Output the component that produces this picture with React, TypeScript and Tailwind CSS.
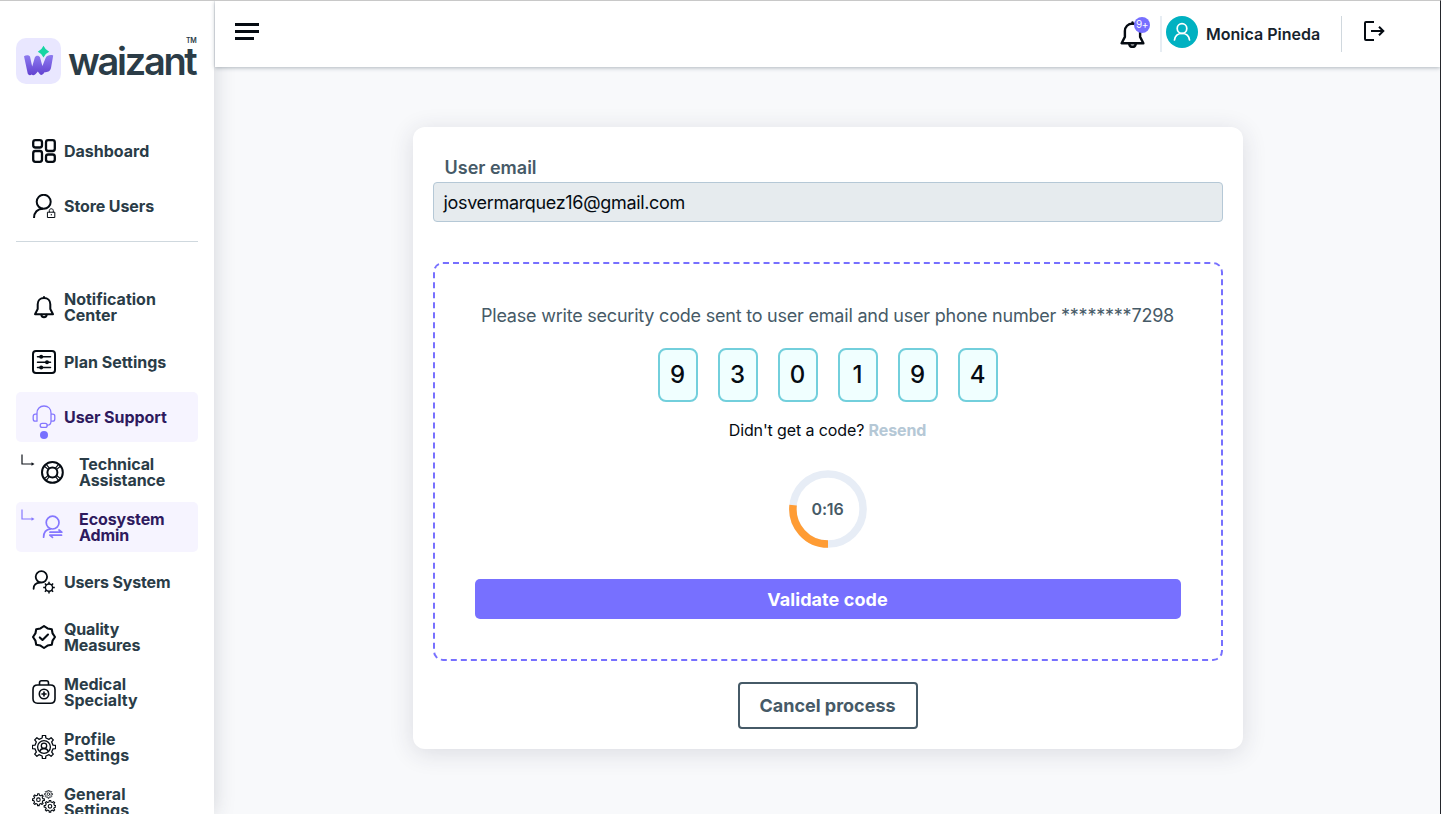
import React from "react";

type P = { children?: React.ReactNode; size?: number; w?: number; className?: string };
const Svg = ({ children, size = 24, w = 2, className = "" }: P) => (
  <svg width={size} height={size} viewBox="0 0 24 24" fill="none" stroke="currentColor" strokeWidth={w} strokeLinecap="round" strokeLinejoin="round" className={className}>
    {children}
  </svg>
);

function gearPath(cx: number, cy: number, r: number, R: number, n: number) {
  const pts: string[] = [];
  const step = (Math.PI * 2) / n;
  for (let i = 0; i < n; i++) {
    const a = i * step - Math.PI / 2;
    const at = (rad: number, off: number) =>
      `${(cx + rad * Math.cos(a + off * step)).toFixed(2)} ${(cy + rad * Math.sin(a + off * step)).toFixed(2)}`;
    pts.push(at(r, -0.26), at(R, -0.17), at(R, 0.17), at(r, 0.26));
  }
  return "M" + pts.join("L") + "Z";
}

function sealPath() {
  const pts: [number, number][] = [];
  for (let i = 0; i < 16; i++) {
    const a = (i * Math.PI) / 8 - Math.PI / 2;
    const r = i % 2 ? 9.3 : 11;
    pts.push([12 + r * Math.cos(a), 12 + r * Math.sin(a)]);
  }
  return "M" + pts.map((p) => p.map((v) => v.toFixed(2)).join(" ")).join("L") + "Z";
}

const BellShape = () => (
  <>
    <path d="M12 3C8.3 3 5.7 5.6 5.7 9.2V14L3 19.2H21L18.3 14V9.2C18.3 5.6 15.7 3 12 3Z" />
    <path d="M12 2V3M9.3 19.8C9.6 21.4 10.6 22.2 12 22.2S14.4 21.4 14.7 19.8" />
  </>
);

const icons = {
  dashboard: (
    <Svg w={2.3}>
      <rect x="1.2" y="1.2" width="8.8" height="7.3" rx="2.2" />
      <rect x="14" y="1.2" width="8.8" height="10.8" rx="2.2" />
      <rect x="1.2" y="12" width="8.8" height="10.8" rx="2.2" />
      <rect x="14" y="15.5" width="8.8" height="7.3" rx="2.2" />
    </Svg>
  ),
  store: (
    <Svg w={2}>
      <circle cx="11.7" cy="7.8" r="7" />
      <path strokeLinecap="butt" d="M2 24C2 18.5 5.5 14.7 11 14.7" />
      <path strokeWidth="1" d="M15.8 18.2H22.8V23.5H15.8ZM17.3 18V16.5C17.3 14.2 21.3 14.2 21.3 16.5V18M19.3 20.4V21" />
    </Svg>
  ),
  bell: <Svg><BellShape /></Svg>,
  plan: (
    <Svg>
      <rect x="1" y="1" width="22" height="22" rx="3" />
      <path strokeWidth="1.5" d="M5.5 6.8H18.5M5.5 12.3H18.5M5.5 17.6H18.5" />
      <g fill="currentColor" stroke="none"><circle cx="9.2" cy="6.8" r="2" /><circle cx="15" cy="12.3" r="2" /><circle cx="9.2" cy="17.6" r="2" /></g>
    </Svg>
  ),
  support: (
    <Svg w={1.3}>
      <path d="M5 9V8C5 3.8 7.8 1 12 1S19 3.8 19 8V9M5 9.2H3.3C2 9.2 1.2 10 1.2 11.3V14C1.2 15.3 2 16.2 3.3 16.2H5ZM19 9.2H20.7C22 9.2 22.8 10 22.8 11.3V14C22.8 15.3 22 16.2 20.7 16.2H19ZM19 16.2C19 18.8 17.5 20.2 15.2 20.2" />
      <rect x="8.2" y="18.4" width="7" height="4" rx="2" />
    </Svg>
  ),
  lifebuoy: (
    <Svg w={2}>
      <circle cx="12.4" cy="12.4" r="10.4" />
      <circle cx="12.4" cy="12.4" r="5" />
      <path d="M4.4 6.2L8.4 9.6M6.2 4.4L9.6 8.4M20.4 6.2L16.4 9.6M18.6 4.4L15.2 8.4M4.4 18.6L8.4 15.2M6.2 20.4L9.6 16.4M20.4 18.6L16.4 15.2M18.6 20.4L15.2 16.4" strokeWidth="1.2" />
    </Svg>
  ),
  ecosystem: (
    <Svg w={1.7}>
      <circle cx="12.6" cy="7.6" r="6.4" />
      <path d="M3.6 22.2C3.6 17.8 6 14.6 10.6 13.9M10 17.2H21.8L19 15M21.5 20.2H9.8L12.5 22.4" />
    </Svg>
  ),
  usersSystem: (
    <Svg w={1.8}>
      <circle cx="9.4" cy="6.8" r="5.7" />
      <path d="M1.6 18.8C1.6 15.2 4 12.8 8 12.6" />
      <circle cx="17" cy="17.6" r="3.6" strokeWidth="1.4" />
      <path strokeWidth="1.5" strokeLinecap="butt" d="M17 11.8V14M17 21.2V23.4M11.2 17.6H13.4M20.6 17.6H22.8M12.9 13.5L14.5 15.1M19.5 20.1L21.1 21.7M12.9 21.7L14.5 20.1M19.5 15.1L21.1 13.5" />
    </Svg>
  ),
  quality: <Svg w={2.1}><path d={sealPath()} /><path d="M7.8 12.4L10.5 15L16 9.6" /></Svg>,
  medical: (
    <Svg w={1.6}>
      <path d="M5.5 5H18.5C21.5 5 23 6.8 23 9.5V18.8C23 21.5 21.5 23.2 18.5 23.2H5.5C2.5 23.2 1 21.5 1 18.8V9.5C1 6.8 2.5 5 5.5 5ZM7.5 5V3C7.5 1.5 8.2 .8 9.5 .8H14.5C15.8 .8 16.5 1.5 16.5 3V5" />
      <circle cx="12" cy="14" r="4.7" />
      <path d="M12 12V16M10 14H14" />
    </Svg>
  ),
  profile: (
    <Svg w={1.3}>
      <path d={gearPath(12, 12, 9.2, 11.7, 8)} />
      <circle cx="12" cy="12" r="6.4" />
      <circle cx="12" cy="10.8" r="2.7" />
      <path d="M7.7 16.5C8.3 14.6 9.8 13.5 12 13.5S15.7 14.6 16.3 16.5" />
    </Svg>
  ),
  general: (
    <Svg w={1.1}>
      <path d={gearPath(6.4, 9.7, 4.6, 6, 8)} /><circle cx="6.4" cy="9.7" r="1.8" />
      <path d={gearPath(18, 16.3, 4.5, 5.9, 8)} /><circle cx="18" cy="16.3" r="1.8" />
      <path strokeWidth=".8" d={gearPath(16.5, 4.2, 3, 4.1, 8)} /><circle strokeWidth=".8" cx="16.5" cy="4.2" r="1.3" />
    </Svg>
  ),
};

type Item = { icon: keyof typeof icons; lines: string[]; sub?: boolean; active?: boolean; dot?: boolean; track?: string };

function NavItem({ icon, lines, sub, active, dot, track = "tracking-normal" }: Item) {
  return (
    <a className={`relative flex h-[50px] shrink-0 items-center rounded-[5px] ${sub ? "gap-[15px] pl-6" : "gap-2 pl-4"} ${active ? "bg-[#f6f4ff] text-[#2e1a5e]" : "text-[#2a3c47]"}`}>
      {sub && (
        <svg width="14" height="12" viewBox="0 0 14 12" className={`absolute left-[5px] top-[7px] ${active ? "text-[#8577ff]" : "text-[#10151c]"}`} fill="none" stroke="currentColor" strokeWidth="1.2">
          <path d="M1 .5V10H11" /><path d="M10.5 8.3L13.5 10L10.5 11.7Z" fill="currentColor" stroke="none" />
        </svg>
      )}
      <span className={active ? "text-[#8577ff]" : "text-[#050b12]"}>{icons[icon]}</span>
      <span className={`whitespace-nowrap text-[16px] font-bold leading-4 ${track}`}>
        {lines.map((l) => <span key={l} className="block">{l}</span>)}
      </span>
      {dot && <i className="absolute left-6 top-[39px] size-2 rounded-full bg-[#7770ff]" />}
    </a>
  );
}

function Logo() {
  return (
    <div className="flex h-[46px] items-center gap-[7px]">
      <svg width="45" height="46" viewBox="0 0 45 46" className="shrink-0">
        <defs>
          <linearGradient id="mark" x1="0" y1="0" x2="0" y2="1"><stop offset="0" stopColor="#8d7bf0" /><stop offset="1" stopColor="#6241d0" /></linearGradient>
        </defs>
        <rect width="45" height="46" rx="10" fill="#e9e7ff" />
        <path fill="url(#mark)" d="M8 18.2C9.8 16.8 12.8 16.8 14 18.4L16.2 28.5L18.8 19.5C19.6 17.2 23.2 17.2 24 19.3L26.4 28L29.6 20C31 17 35 16.6 37.2 17.5L35 30C34 34 31.5 34 28.5 34.2C26.5 37.5 24.5 37.6 23.3 35.6L21.8 33.6C19.5 36.5 17.5 38.5 15.6 36.6C13.8 38 12 36.9 11.6 35Z" />
        <path fill="#16d5a3" d="M27.5 7.8Q29.3 12 33.2 13.7Q29.3 15.4 27.5 19.4Q25.7 15.4 21.8 13.7Q25.7 12 27.5 7.8Z" />
      </svg>
      <div className="relative text-[38px] font-semibold leading-[46px] tracking-[-2.3px] text-[#2b3c47]">
        waizant
        <span className="absolute right-[-1px] top-[-3px] text-[7px] font-semibold leading-3 tracking-[-0.3px]">TM</span>
      </div>
    </div>
  );
}

const first: Item[] = [
  { icon: "dashboard", lines: ["Dashboard"] },
  { icon: "store", lines: ["Store Users"], track: "tracking-[-0.1px]" },
];
const second: Item[] = [
  { icon: "bell", lines: ["Notification", "Center"] },
  { icon: "plan", lines: ["Plan Settings"] },
  { icon: "support", lines: ["User Support"], active: true, dot: true, track: "tracking-[-0.08px]" },
  { icon: "lifebuoy", lines: ["Technical", "Assistance"], sub: true, track: "tracking-[-0.08px]" },
  { icon: "ecosystem", lines: ["Ecosystem", "Admin"], sub: true, active: true, track: "tracking-[-0.08px]" },
  { icon: "usersSystem", lines: ["Users System"], track: "tracking-[-0.17px]" },
  { icon: "quality", lines: ["Quality", "Measures"], track: "tracking-[-0.15px]" },
  { icon: "medical", lines: ["Medical", "Specialty"] },
  { icon: "profile", lines: ["Profile", "Settings"], track: "tracking-[0.1px]" },
  { icon: "general", lines: ["General", "Settings"], track: "tracking-[0.1px]" },
];

export default function App() {
  return (
    <div className="flex h-[814px] w-[1441px] overflow-hidden border-r border-t border-r-[#24262c] border-t-[#c8c8c8] bg-[#f8f9fb] font-['Inter',sans-serif]">
      <aside className="z-10 flex w-[214px] shrink-0 flex-col overflow-hidden bg-white px-4 pt-[37px] shadow-[0_0_20px_rgba(40,45,60,0.18)]">
        <Logo />
        <nav className="mt-[42px] flex flex-col gap-[5px]">{first.map((i) => <NavItem key={i.lines[0]} {...i} />)}</nav>
        <hr className="mt-[10px] shrink-0 border-[#cfd8de]" />
        <nav className="mt-10 flex flex-col gap-[5px]">{second.map((i) => <NavItem key={i.lines[0]} {...i} />)}</nav>
      </aside>
      <div className="flex flex-1 flex-col">
        <header className="z-20 ml-px flex h-[66px] items-center bg-white pl-5 shadow-[0_1px_4px_rgba(40,60,75,0.35)]">
          <div className="mb-[5px] flex w-6 flex-col gap-[4px]">
            <i className="h-[3px] w-6 bg-[#050b12]" /><i className="h-[3px] w-6 bg-[#050b12]" /><i className="h-[3px] w-[19px] bg-[#050b12]" />
          </div>
          <div className="ml-auto flex items-center">
            <div className="relative text-[#050b12]">
              <Svg size={29} w={2}><BellShape /></Svg>
              <span className="absolute left-[16px] top-[-3px] flex size-4 items-center justify-center rounded-full bg-[#7770ff] text-[10px] tracking-[-0.3px] text-white">9+</span>
            </div>
            <i className="ml-[13px] h-9 w-[2px] bg-[#e7edf3]" />
            <span className="mb-1 ml-1 flex size-8 items-center justify-center rounded-full bg-[#00b1c1] text-white">
              <svg width="20" height="20" viewBox="0 0 20 20" fill="none" stroke="currentColor" strokeWidth="1.7" strokeLinecap="round"><circle cx="10" cy="6.5" r="4.8" /><path d="M2.5 18C3 14 6 11.5 10 11.5S17 14 17.5 18" /></svg>
            </span>
            <span className="ml-2 w-[115px] whitespace-nowrap text-[16px] font-semibold text-[#17232d]">Monica Pineda</span>
            <i className="ml-5 h-9 w-px bg-[#d0d8de]" />
            <svg width="22" height="22" viewBox="0 0 22 22" fill="none" stroke="#050b12" strokeWidth="2" className="mb-[6px] ml-[21px] mr-[55px]"><path d="M11 2H3Q2 2 2 3V19Q2 20 3 20H11M8 11H20M16 6.7L20.3 11L16 15.3" /></svg>
          </div>
        </header>
        <main className="ml-px flex flex-1 justify-center pt-[60px]">
          <section className="flex h-[622px] w-[830px] flex-col items-center rounded-xl bg-white px-5 pt-[31px] shadow-[0_4px_24px_rgba(40,40,70,0.14)]">
            <div className="self-stretch">
              <label className="block pl-3 text-[18px] font-semibold leading-5 text-[#465a67]">User email</label>
              <div className="mt-1 flex h-10 items-center rounded-[4px] border border-[#b5c8d6] bg-[#e6ebee] pl-[10px] text-[18px] tracking-[-0.33px] text-[#050b12]">josvermarquez16@gmail.com</div>
            </div>
            <div className="mt-10 flex h-[399px] w-full shrink-0 flex-col items-center rounded-[10px] border-2 border-dashed border-[#7770ff] px-10">
              <p className="mt-10 whitespace-nowrap text-[18px] leading-6 tracking-[-0.215px] text-[#465a67]">Please write security code sent to user email and user phone number ********7298</p>
              <div className="mt-5 flex gap-5">
                {["9", "3", "0", "1", "9", "4"].map((d, i) => (
                  <span key={i} className="flex h-[54px] w-10 items-center justify-center rounded-lg border-2 border-[#72cfdc] bg-[#f0ffff] text-[24px] font-medium text-[#050b12]">{d}</span>
                ))}
              </div>
              <p className="mt-4 whitespace-nowrap text-[16px] leading-6 tracking-[-0.12px] text-[#050b12]">Didn't get a code? <b className="text-[#b5c8d6]">Resend</b></p>
              <div className="relative mt-7 flex size-[78px] items-center justify-center">
                <svg width="78" height="78" viewBox="0 0 78 78" fill="none" strokeWidth="7.5" className="absolute inset-0">
                  <circle cx="39" cy="39" r="35.1" stroke="#e7edf6" /><path d="M39 74.1A35.1 35.1 0 0 1 4.1 35.2" stroke="#ff9c34" />
                </svg>
                <span className="relative text-[16px] font-semibold tracking-[-0.2px] text-[#465a67]">0:16</span>
              </div>
              <button className="mt-[31px] h-10 w-full shrink-0 rounded-[5px] bg-[#7770ff] text-[18px] font-bold tracking-[0.08px] text-white">Validate code</button>
            </div>
            <button className="mt-[21px] h-[47px] w-[180px] shrink-0 rounded-[4px] border-2 border-[#465a67] text-[18px] font-bold text-[#465a67]">Cancel process</button>
          </section>
        </main>
      </div>
    </div>
  );
}
